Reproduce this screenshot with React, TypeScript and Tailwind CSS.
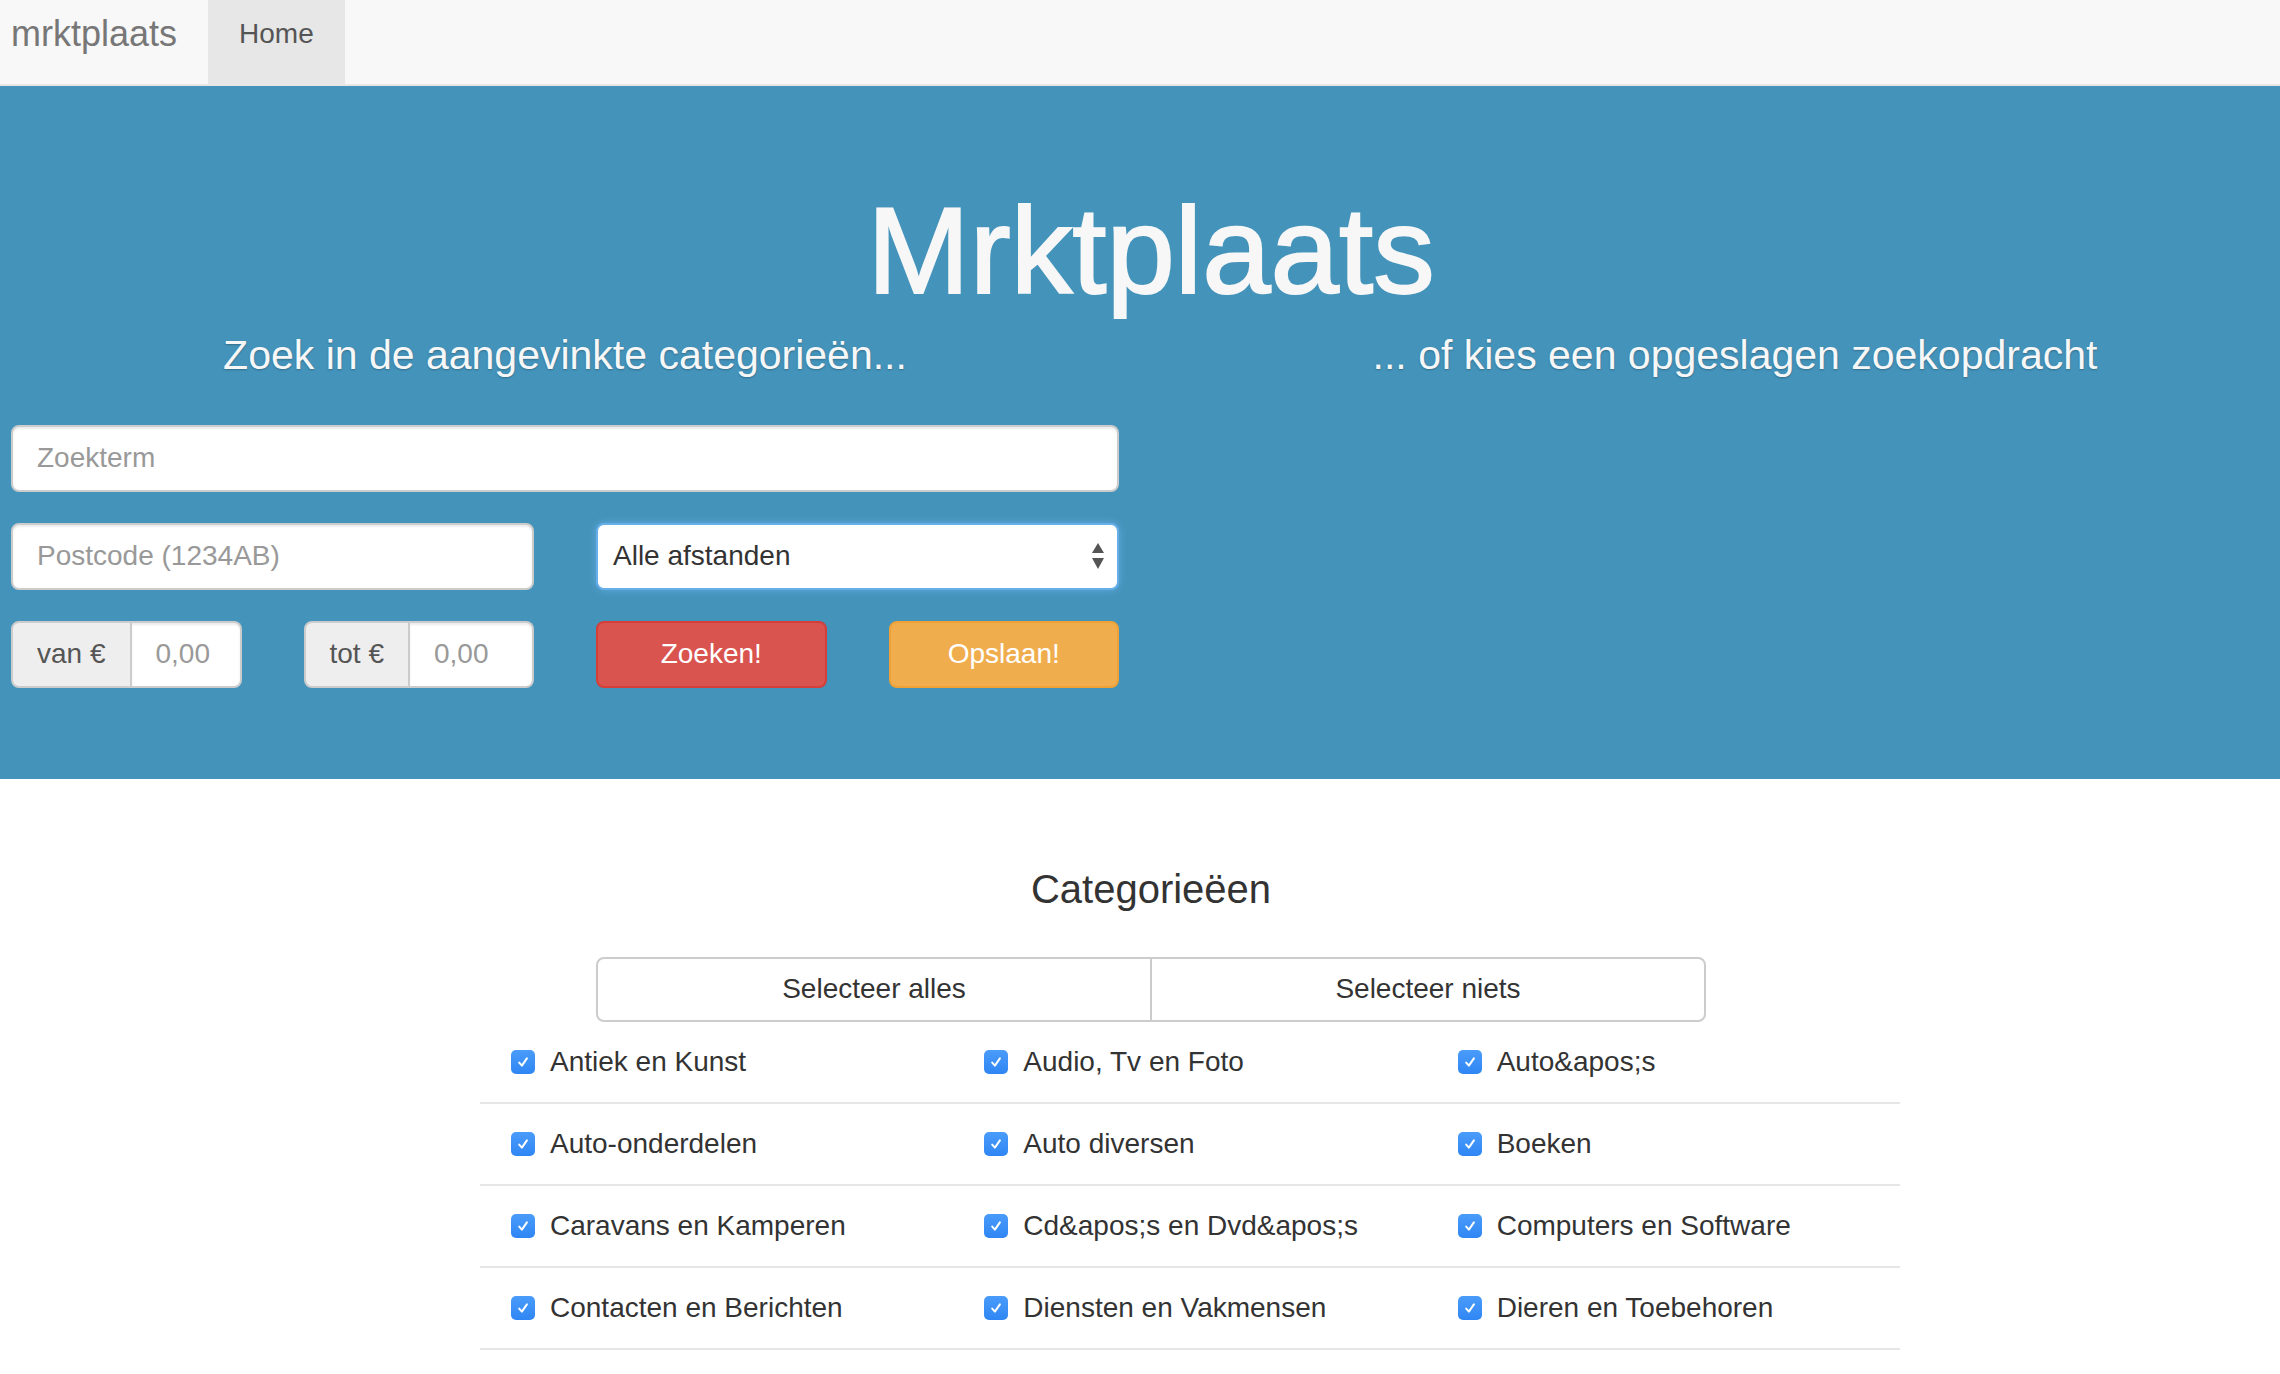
// App.tsx - Mrktplaats zoekpagina
const categories: string[][] = [
  ['Antiek en Kunst', 'Audio, Tv en Foto', 'Auto&apos;s'],
  ['Auto-onderdelen', 'Auto diversen', 'Boeken'],
  ['Caravans en Kamperen', 'Cd&apos;s en Dvd&apos;s', 'Computers en Software'],
  ['Contacten en Berichten', 'Diensten en Vakmensen', 'Dieren en Toebehoren'],
];

const CheckBox: React.FC = () => (
  <span className="flex h-[24px] w-[24px] shrink-0 items-center justify-center rounded-[5px] bg-gradient-to-b from-[#4a9cfa] to-[#2f86f4]">
    <svg width="16" height="16" viewBox="0 0 16 16" fill="none">
      <path
        d="M4.2 8.6 L6.9 11.6 L11.9 4.4"
        stroke="white"
        strokeWidth="2"
        strokeLinecap="round"
        strokeLinejoin="round"
      />
    </svg>
  </span>
);

const inputCls =
  'h-[67px] w-full rounded-[8px] border-2 border-[#ccc] bg-white px-[24px] text-[28px] text-[#555] shadow-[inset_0_2px_2px_rgba(0,0,0,0.075)] outline-none placeholder:text-[#999]';

const PriceInput: React.FC<{ label: string }> = ({ label }) => (
  <div className="flex h-[67px] text-[28px]">
    <span className="flex items-center rounded-l-[8px] border-2 border-[#ccc] bg-[#eee] px-[24px] text-[#555]">
      {label}
    </span>
    <input
      placeholder="0,00"
      className="w-full min-w-0 flex-1 rounded-r-[8px] border-2 border-l-0 border-[#ccc] bg-white px-[24px] text-[#555] shadow-[inset_0_2px_2px_rgba(0,0,0,0.075)] outline-none placeholder:text-[#999]"
    />
  </div>
);

export default function App() {
  return (
    <div className="min-h-screen bg-white font-['Liberation_Sans',Arial,sans-serif] text-[#333]">
      {/* navbar */}
      <nav className="flex h-[86px] border-b-2 border-[#e7e7e7] bg-[#f8f8f8]">
        <a className="pl-[11px] pr-[31px] pt-[14px] text-[36px] leading-[40px] text-[#777]">
          mrktplaats
        </a>
        <a className="bg-[#e7e7e7] px-[31px] pt-[14px] text-[28px] leading-[40px] text-[#555]">
          Home
        </a>
      </nav>

      {/* hero met zoekformulier */}
      <section className="bg-[#4493ba] pb-[91px] pt-[97px] text-[#f7f7f7]">
        <h1 className="pl-[22px] text-center text-[123px] leading-[1.1] [-webkit-text-stroke:2px_#f7f7f7]">
          Mrktplaats
        </h1>

        <div className="mt-[9px] flex">
          <div className="w-[1130px] px-[11px]">
            <p className="text-center text-[41px] leading-[1.4] [text-shadow:0_1px_2px_rgba(0,0,0,0.25)]">
              Zoek in de aangevinkte categorieën...
            </p>

            <input placeholder="Zoekterm" className={`mt-[40px] ${inputCls}`} />

            <div className="mt-[31px] grid grid-cols-2 gap-x-[62px]">
              <input placeholder="Postcode (1234AB)" className={inputCls} />
              <div className="flex h-[67px] items-center justify-between rounded-[8px] border-2 border-[#66afe9] bg-white pl-[15px] pr-[12px] text-[28px] text-[#333] shadow-[0_0_8px_rgba(102,175,233,0.8)]">
                <span>Alle afstanden</span>
                <svg width="14" height="28" viewBox="0 0 14 28" fill="#555">
                  <path d="M7 1 L13 11 L1 11 Z" />
                  <path d="M1 16 L13 16 L7 27 Z" />
                </svg>
              </div>
            </div>

            <div className="mt-[31px] grid grid-cols-4 gap-x-[62px]">
              <PriceInput label="van €" />
              <PriceInput label="tot €" />
              <button className="h-[67px] rounded-[8px] border-2 border-[#d43f3a] bg-[#d9534f] text-[28px] text-white">
                Zoeken!
              </button>
              <button className="h-[67px] rounded-[8px] border-2 border-[#eea236] bg-[#f0ad4e] text-[28px] text-white">
                Opslaan!
              </button>
            </div>
          </div>

          <div className="flex-1 pl-[60px]">
            <p className="text-center text-[41px] leading-[1.4] [text-shadow:0_1px_2px_rgba(0,0,0,0.25)]">
              ... of kies een opgeslagen zoekopdracht
            </p>
          </div>
        </div>
      </section>

      {/* categorieën */}
      <section className="pb-[40px]">
        <h3 className="mt-[88px] pl-[22px] text-center text-[40px] leading-[1.1] text-[#333]">
          Categorieëen
        </h3>

        <div className="mt-[46px] flex justify-center pl-[22px]">
          <div className="flex h-[65px] w-[1110px] rounded-[8px] border-2 border-[#ccc] text-[28px] text-[#333]">
            <button className="flex-1">Selecteer alles</button>
            <button className="flex-1 border-l-2 border-[#ccc]">Selecteer niets</button>
          </div>
        </div>

        <div className="ml-[480px] w-[1420px]">
          {categories.map((row, i) => (
            <div key={i} className="grid h-[82px] grid-cols-3 border-b-2 border-[#e6e6e6]">
              {row.map((name) => (
                <label key={name} className="flex items-center gap-[15px] pl-[31px] text-[28px] text-[#333]">
                  <CheckBox />
                  <span>{name}</span>
                </label>
              ))}
            </div>
          ))}
        </div>
      </section>
    </div>
  );
}
